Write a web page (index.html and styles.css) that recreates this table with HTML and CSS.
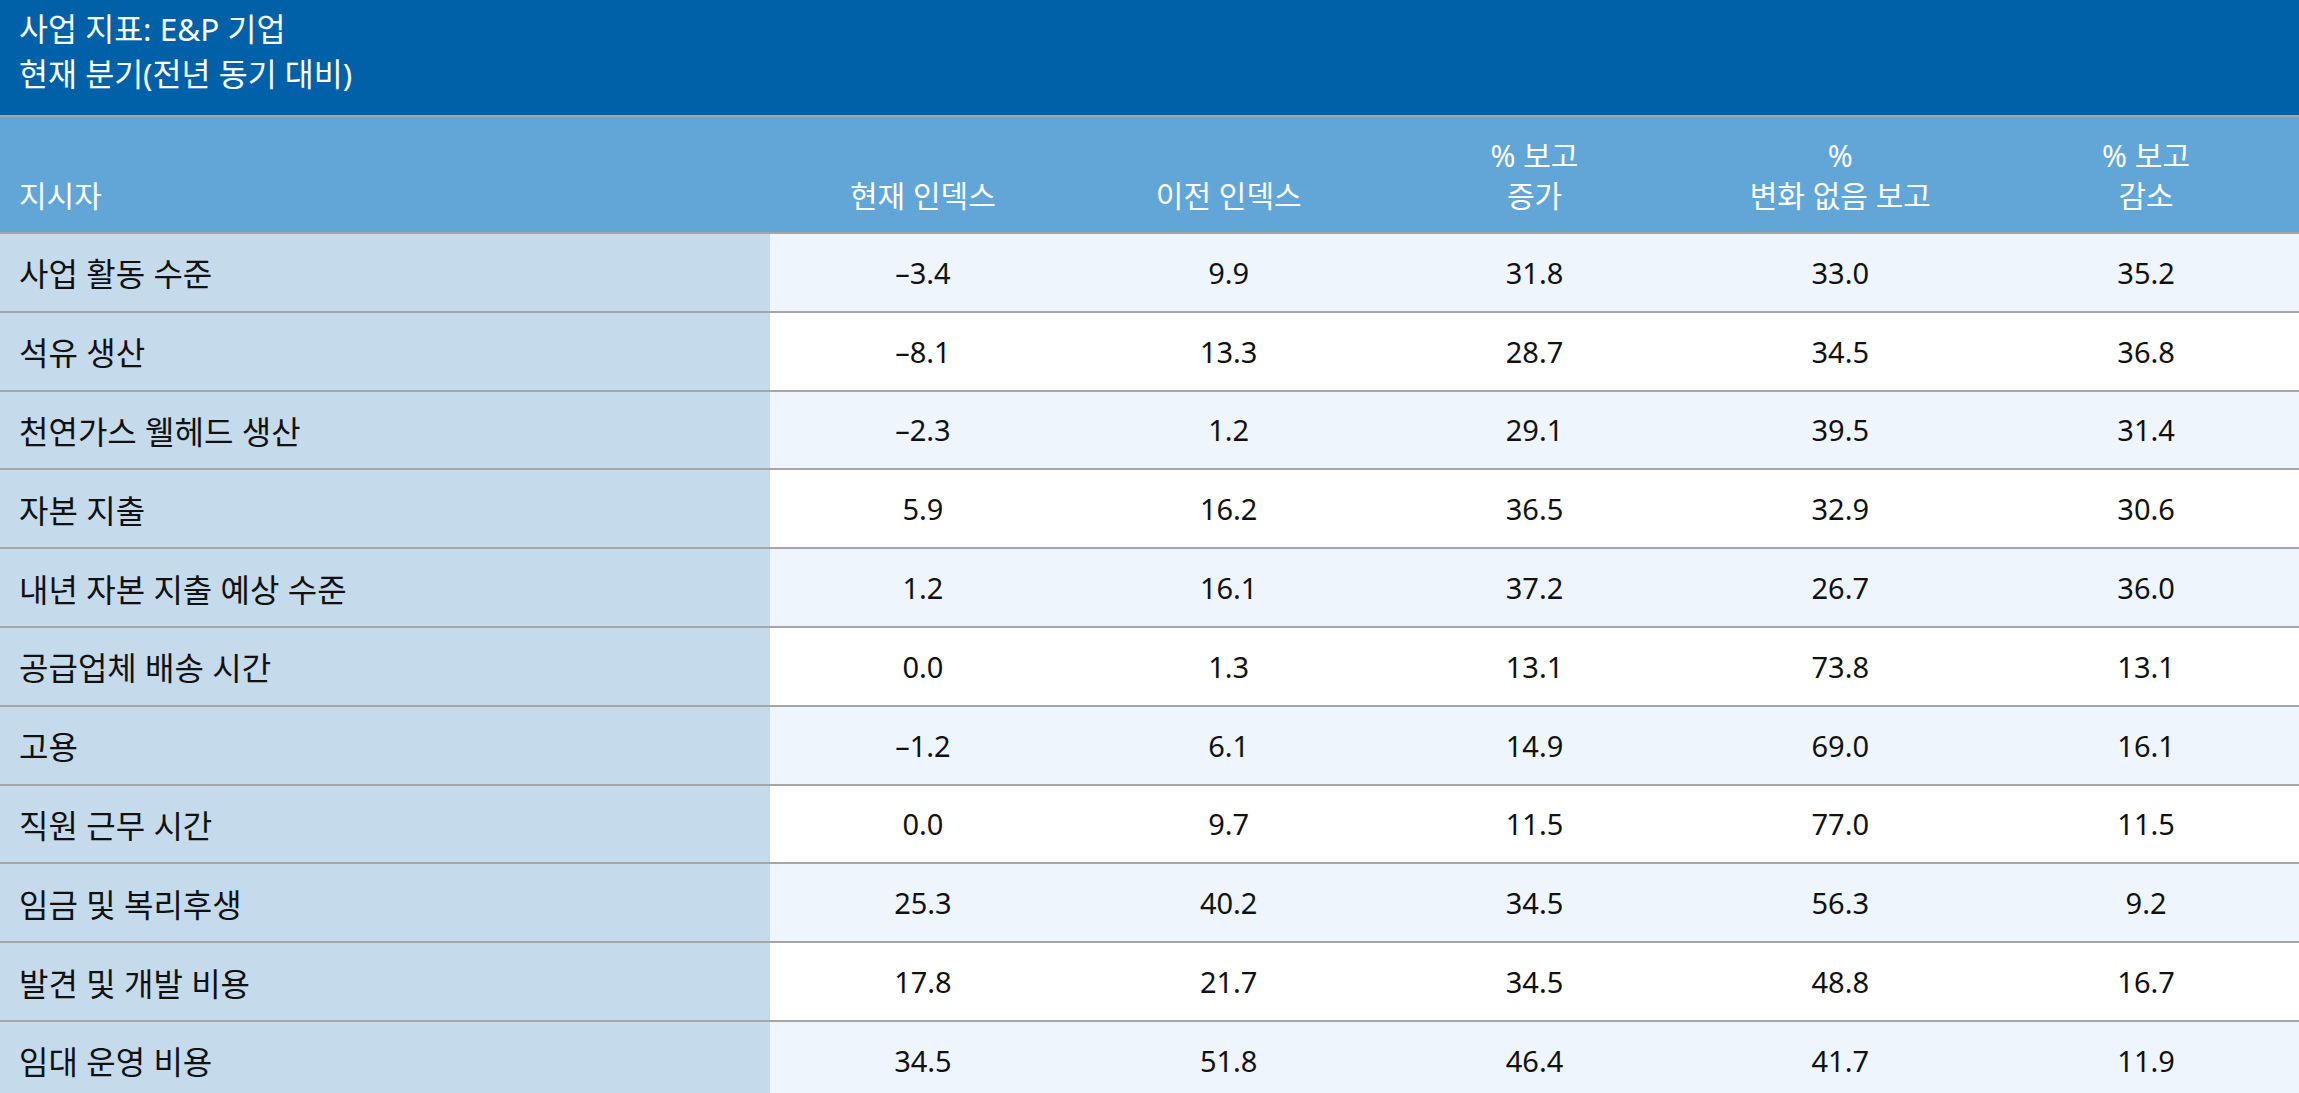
FILE: index.html
```html
<!DOCTYPE html>
<html lang="ko">
<head>
<meta charset="utf-8">
<title>사업 지표: E&amp;P 기업</title>
<link rel="stylesheet" href="styles.css">
</head>
<body>
<div class="page">
  <header class="title">
    <div>사업 지표: E&amp;P 기업</div>
    <div>현재 분기(전년 동기 대비)</div>
  </header>
  <div class="row head">
    <div class="cell first">지시자</div>
    <div class="cell">현재 인덱스</div>
    <div class="cell">이전 인덱스</div>
    <div class="cell">% 보고<br>증가</div>
    <div class="cell">%<br>변화 없음 보고</div>
    <div class="cell">% 보고<br>감소</div>
  </div>
  <div class="row alt"><div class="cell first">사업 활동 수준</div><div class="cell">–3.4</div><div class="cell">9.9</div><div class="cell">31.8</div><div class="cell">33.0</div><div class="cell">35.2</div></div>
  <div class="row"><div class="cell first">석유 생산</div><div class="cell">–8.1</div><div class="cell">13.3</div><div class="cell">28.7</div><div class="cell">34.5</div><div class="cell">36.8</div></div>
  <div class="row alt"><div class="cell first">천연가스 웰헤드 생산</div><div class="cell">–2.3</div><div class="cell">1.2</div><div class="cell">29.1</div><div class="cell">39.5</div><div class="cell">31.4</div></div>
  <div class="row"><div class="cell first">자본 지출</div><div class="cell">5.9</div><div class="cell">16.2</div><div class="cell">36.5</div><div class="cell">32.9</div><div class="cell">30.6</div></div>
  <div class="row alt"><div class="cell first">내년 자본 지출 예상 수준</div><div class="cell">1.2</div><div class="cell">16.1</div><div class="cell">37.2</div><div class="cell">26.7</div><div class="cell">36.0</div></div>
  <div class="row"><div class="cell first">공급업체 배송 시간</div><div class="cell">0.0</div><div class="cell">1.3</div><div class="cell">13.1</div><div class="cell">73.8</div><div class="cell">13.1</div></div>
  <div class="row alt"><div class="cell first">고용</div><div class="cell">–1.2</div><div class="cell">6.1</div><div class="cell">14.9</div><div class="cell">69.0</div><div class="cell">16.1</div></div>
  <div class="row"><div class="cell first">직원 근무 시간</div><div class="cell">0.0</div><div class="cell">9.7</div><div class="cell">11.5</div><div class="cell">77.0</div><div class="cell">11.5</div></div>
  <div class="row alt"><div class="cell first">임금 및 복리후생</div><div class="cell">25.3</div><div class="cell">40.2</div><div class="cell">34.5</div><div class="cell">56.3</div><div class="cell">9.2</div></div>
  <div class="row"><div class="cell first">발견 및 개발 비용</div><div class="cell">17.8</div><div class="cell">21.7</div><div class="cell">34.5</div><div class="cell">48.8</div><div class="cell">16.7</div></div>
  <div class="row alt"><div class="cell first">임대 운영 비용</div><div class="cell">34.5</div><div class="cell">51.8</div><div class="cell">46.4</div><div class="cell">41.7</div><div class="cell">11.9</div></div>
</div>
</body>
</html>
```

FILE: styles.css
```css
html, body {
  margin: 0;
  padding: 0;
}
body {
  font-family: "Noto Sans", "Noto Sans CJK KR", sans-serif;
  font-size: 29px;
  color: #111;
  background: #ffffff;
  overflow: hidden;
}
.page {
  width: 2299px;
}
.title {
  box-sizing: border-box;
  height: 117px;
  background: #0061a8;
  color: #ffffff;
  padding: 6px 19px 0;
  line-height: 45px;
  font-size: 31.5px;
  border-bottom: 2px solid #a6a6a6;
}
.row {
  display: grid;
  grid-template-columns: 770px repeat(5, 1fr);
  height: 76.8px;
  border-bottom: 2px solid #a6a6a6;
  background: #ffffff;
}
.row.alt {
  background: #eef5fc;
}
.cell {
  display: flex;
  align-items: center;
  justify-content: center;
  text-align: center;
}
.cell.first {
  justify-content: flex-start;
  padding-left: 19px;
  background: #c5daeb;
  text-align: left;
  font-size: 32px;
}
.row.head {
  height: 115px;
  background: #62a6d8;
  color: #ffffff;
  line-height: 40px;
  font-size: 30px;
}
.row.head .cell {
  align-items: flex-end;
  padding-bottom: 16px;
}
.row.head .cell.first {
  background: transparent;
  font-size: 30px;
}
```
